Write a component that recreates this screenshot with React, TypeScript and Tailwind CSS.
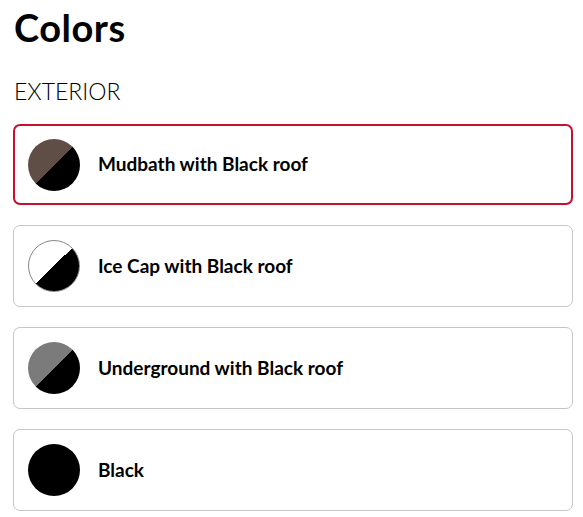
import React from 'react'

type Swatch = { id: string; name: string; swatch: string }

const swatches: Swatch[] = [
  { id: 'mudbath', name: 'Mudbath with Black roof', swatch: 'bg-[linear-gradient(135deg,#5e4e45_50%,#000_50%)]' },
  { id: 'icecap', name: 'Ice Cap with Black roof', swatch: 'bg-[linear-gradient(135deg,#fff_50%,#000_50%)] border border-[#888]' },
  { id: 'underground', name: 'Underground with Black roof', swatch: 'bg-[linear-gradient(135deg,#7b7b7b_50%,#000_50%)]' },
  { id: 'black', name: 'Black', swatch: 'bg-black' },
]

export default function App() {
  const selected = 'mudbath'
  return (
    <div className="bg-white min-h-screen pl-[13px] pr-[10px] pt-[5px] font-['Lato','Liberation_Sans',sans-serif] text-black">
      <h1 className="text-[38px] font-bold leading-[44px] tracking-[0.5px] pl-px">Colors</h1>
      <h2 className="text-[23px] font-light leading-[28px] mt-[28px] pl-px">EXTERIOR</h2>
      <div className="flex flex-col gap-[20px] mt-[19px]">
        {swatches.map(s => (
          <div
            key={s.id}
            className={
              s.id === selected
                ? 'flex items-center h-[81px] rounded-[7px] border-2 border-[#c8102e] pl-[13px]'
                : 'flex items-center h-[82px] rounded-[7px] border border-[#c6c6c6] pl-[14px]'
            }
          >
            <div className={`w-[52px] h-[52px] rounded-full shrink-0 ${s.swatch}`} />
            <span className="ml-[18px] text-[19px] font-bold">{s.name}</span>
          </div>
        ))}
      </div>
    </div>
  )
}
